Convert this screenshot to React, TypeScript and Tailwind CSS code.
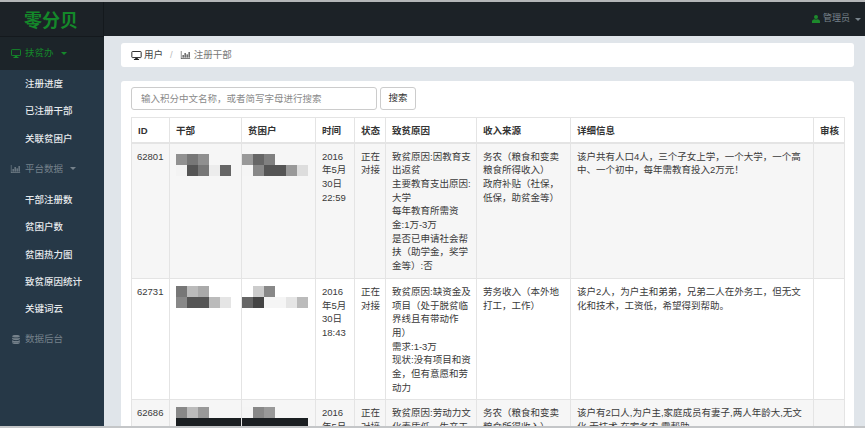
import React from 'react'

const font = { fontFamily: '"Liberation Sans", "Noto Sans CJK SC", sans-serif' }

function Desktop({ className }: { className: string }) {
  return (
    <svg viewBox="0 0 16 14" className={className} fill="none">
      <rect x="0.75" y="0.75" width="14.5" height="9.5" rx="1" stroke="currentColor" strokeWidth="1.5" />
      <path d="M6 11h4v1.5h2V14H4v-1.5h2z" fill="currentColor" />
    </svg>
  )
}

function Bars({ className }: { className: string }) {
  return (
    <svg viewBox="0 0 14 12" className={className} fill="currentColor">
      <path d="M0 0h1v11h13v1H0z" />
      <rect x="2.5" y="6" width="2" height="4" />
      <rect x="5.5" y="3" width="2" height="7" />
      <rect x="8.5" y="5" width="2" height="5" />
      <rect x="11.5" y="1.5" width="2" height="8.5" />
    </svg>
  )
}

function Database({ className }: { className: string }) {
  return (
    <svg viewBox="0 0 12 14" className={className} fill="currentColor">
      <path d="M6 0c3.3 0 6 .8 6 2s-2.700 2-6 2-6-.8-6-2 2.700-2 6-2z" />
      <path d="M0 3.700c1 1 3.400 1.500 6 1.500s5-.5 6-1.500V6c0 1.100-2.700 2-6 2S0 7.100 0 6z" />
      <path d="M0 7.700c1 1 3.400 1.500 6 1.500s5-.5 6-1.500V10c0 1.100-2.700 2-6 2S0 11.100 0 10z" />
      <path d="M0 11c1 1 3.400 1.300 6 1.300s5-.3 6-1.300v1c0 1.100-2.700 2-6 2s-6-.9-6-2z" />
    </svg>
  )
}

function User({ className }: { className: string }) {
  return (
    <svg viewBox="0 0 10 10" className={className} fill="currentColor">
      <circle cx="5" cy="2.600" r="2.500" />
      <path d="M0 10V7.800C0 6.300 1.500 5.500 3 5.200c1.200.6 2.800.6 4 0 1.500.3 3 1.100 3 2.600V10z" />
    </svg>
  )
}

function Caret({ className }: { className: string }) {
  return <span className={`inline-block border-x-[3px] border-t-[3px] border-x-transparent ${className}`} />
}

// mosaic that hides the names, one row of 11px tiles per array
function Mosaic({ rows }: { rows: string[][] }) {
  return (
    <div className="blur-[0.5px]">
      {rows.map((row, i) => (
        <div key={i} className="flex h-[11px]">
          {row.map((c, j) => (
            <div key={j} className="h-[11px] w-[11px]" style={{ backgroundColor: c }} />
          ))}
        </div>
      ))}
    </div>
  )
}

const subItem = 'flex h-[27.300px] items-center pl-[25px] text-[9.500px] font-medium text-[#e6eaed]'

function SubMenu({ items }: { items: string[] }) {
  return (
    <ul>
      {items.map((t) => (
        <li key={t} className={subItem}>{t}</li>
      ))}
    </ul>
  )
}

function Sidebar() {
  return (
    <aside className="w-[104px] shrink-0 bg-[#263847]">
      <div className="flex h-[34px] items-center justify-center border-r border-[#14191d] bg-[#1c2227] pr-[1px] pt-[4px] text-[18px] font-bold text-[#14882a]">
        零分贝
      </div>
      <div className="flex h-[34px] items-center gap-[4px] border-t border-[#14191d] bg-[#1c2429] pl-[11px] text-[9.500px] text-[#14892a]">
        <Desktop className="h-[9px] w-[10px]" />
        <span>扶贫办</span>
        <Caret className="ml-[3px] border-t-[#14892a]" />
      </div>
      <div className="pt-[0.500px]">
        <SubMenu items={['注册进度', '已注册干部', '关联贫困户']} />
      </div>
      <div className="mt-[3px] flex h-[27px] items-center gap-[4px] pl-[10px] text-[9.500px] text-[#75818b]">
        <Bars className="h-[8px] w-[11px]" />
        <span>平台数据</span>
        <Caret className="ml-[3px] border-t-[#75818b]" />
      </div>
      <div className="pt-[4px]">
        <SubMenu items={['干部注册数', '贫困户数', '贫困热力图', '致贫原因统计', '关键词云']} />
      </div>
      <div className="mt-[3px] flex h-[27px] items-center gap-[5px] pl-[12px] text-[9.500px] text-[#75818b]">
        <Database className="h-[9px] w-[8px]" />
        <span>数据后台</span>
      </div>
    </aside>
  )
}

const th = 'border border-[#e4e4e4] border-b-2 pl-[6px] pr-0 pt-[2px] text-left text-[9.500px] font-bold text-[#333] whitespace-nowrap'
const td = 'border border-[#e4e4e4] pl-[6px] pr-[5px] pt-[6px] pb-[5px] align-top'
const mosaicTd = 'border border-[#e4e4e4] pb-[5px] align-top'

type Row = {
  id: string
  cadre: string[][]
  poor: string[][]
  time: string[]
  reason: string[]
  income: string[]
  detail: string
  height: string
  mosaicTop: string
  stripe: boolean
}

const rows: Row[] = [
  {
    id: '62801',
    cadre: [
      ['#919191', '#777777', '#8f8f8f'],
      ['#f3f3f3', '#555555', '#777777', '#ececec', '#666666'],
    ],
    poor: [
      ['#999999', '#666666', '#808080'],
      ['#f5f5f5', '#888888', '#555555', '#555555', '#999999', '#dddddd'],
    ],
    time: ['2016', '年5月', '30日', '22:59'],
    reason: ['致贫原因:因教育支出返贫', '主要教育支出原因:大学', '每年教育所需资金:1万-3万', '是否已申请社会帮扶（助学金，奖学金等）:否'],
    income: ['务农（粮食和变卖粮食所得收入）', '政府补贴（社保，低保，助贫金等）'],
    detail: '该户共有人口4人，三个子女上学，一个大学，一个高中、一个初中，每年需教育投入2万元！',
    height: 'h-[134px]',
    mosaicTop: 'pt-[10px]',
    stripe: true,
  },
  {
    id: '62731',
    cadre: [
      ['#777777', '#bbbbbb', '#aaaaaa'],
      ['#888888', '#555555', '#555555', '#bbbbbb', '#e5e5e5'],
    ],
    poor: [
      ['#ffffff', '#cccccc', '#888888'],
      ['#666666', '#444444', '#f5f5f5', '#f5f5f5', '#e5e5e5', '#bbbbbb'],
    ],
    time: ['2016', '年5月', '30日', '18:43'],
    reason: ['致贫原因:缺资金及项目（处于脱贫临界线且有带动作用）', '需求:1-3万', '现状:没有项目和资金，但有意愿和劳动力'],
    income: ['劳务收入（本外地打工，工作）'],
    detail: '该户2人，为户主和弟弟，兄弟二人在外务工，但无文化和技术，工资低，希望得到帮助。',
    height: 'h-[120px]',
    mosaicTop: 'pt-[7px]',
    stripe: false,
  },
  {
    id: '62686',
    cadre: [
      ['#888888', '#bbbbbb', '#999999'],
      ['#1b1f22', '#1b1f22', '#1b1f22', '#1b1f22', '#1b1f22', '#1b1f22'],
    ],
    poor: [
      ['#f5f5f5', '#888888', '#999999'],
      ['#1b1f22', '#1b1f22', '#1b1f22', '#1b1f22', '#1b1f22', '#1b1f22'],
    ],
    time: ['2016', '年5月', '30日', '14:20'],
    reason: ['致贫原因:劳动力文化素质低，生产工具落后'],
    income: ['务农（粮食和变卖粮食所得收入）'],
    detail: '该户有2口人,为户主,家庭成员有妻子,两人年龄大,无文化,无技术,在家务农,需帮助.',
    height: 'h-[120px]',
    mosaicTop: 'pt-[7px]',
    stripe: true,
  },
]

function DataTable() {
  return (
    <table className="w-[713px] table-fixed border-collapse border border-[#e4e4e4] text-[9.500px] leading-[13.700px] text-[#3a3a3a]">
      <colgroup>
        <col className="w-[38px]" />
        <col className="w-[72px]" />
        <col className="w-[74px]" />
        <col className="w-[39px]" />
        <col className="w-[31px]" />
        <col className="w-[91px]" />
        <col className="w-[94px]" />
        <col className="w-[243px]" />
        <col className="w-[31px]" />
      </colgroup>
      <thead>
        <tr className="h-[25px]">
          {['ID', '干部', '贫困户', '时间', '状态', '致贫原因', '收入来源', '详细信息', '审核'].map((h) => (
            <th key={h} className={th}>{h}</th>
          ))}
        </tr>
      </thead>
      <tbody>
        {rows.map((r) => (
          <tr key={r.id} className={`${r.height} ${r.stripe ? 'bg-[#f6f6f6]' : 'bg-white'}`}>
            <td className={`${td} !pl-[5px]`}>{r.id}</td>
            <td className={`${mosaicTd} ${r.mosaicTop} pl-[6px]`}><Mosaic rows={r.cadre} /></td>
            <td className={`${mosaicTd} ${r.mosaicTop}`}><Mosaic rows={r.poor} /></td>
            <td className={td}>{r.time.map((t) => <div key={t}>{t}</div>)}</td>
            <td className={td}>正在对接</td>
            <td className={td}>{r.reason.map((t) => <div key={t}>{t}</div>)}</td>
            <td className={td}>{r.income.map((t) => <div key={t}>{t}</div>)}</td>
            <td className={td}>{r.detail}</td>
            <td className={td}></td>
          </tr>
        ))}
      </tbody>
    </table>
  )
}

export default function App() {
  return (
    <div className="flex h-[428px] w-[865px] flex-col overflow-hidden bg-[#e0e5ea]" style={font}>
      <div className="h-[2px] shrink-0 bg-[#b4b6b8]" />
      <div className="flex min-h-0 flex-1">
        <Sidebar />
        <div className="flex min-w-0 flex-1 flex-col">
          <header className="flex h-[34px] shrink-0 items-center justify-end gap-[3px] bg-[#1c2227] pr-[4px] text-[9px] text-[#78838c]">
            <User className="h-[8px] w-[8px] text-[#1d8a2c]" />
            <span>管理员</span>
            <Caret className="ml-[2px] border-t-[#78838c]" />
          </header>
          <main className="min-h-0 flex-1 overflow-hidden pl-[17px] pr-[11px] pt-[7px]">
            <nav className="flex h-[24px] items-center rounded-[3px] bg-white pl-[10px] text-[9.500px] text-[#444]">
              <Desktop className="mr-[2px] h-[9px] w-[11px] text-[#222]" />
              <span>用户</span>
              <span className="mx-[7px] text-[#bbb]">/</span>
              <Bars className="mr-[3px] h-[8px] w-[11px] text-[#555]" />
              <span className="text-[#777]">注册干部</span>
            </nav>
            <section className="mt-[14px] rounded-t-[3px] bg-white px-[10px] pt-[6px]">
              <div className="mb-[7px] flex gap-[3px]">
                <input
                  readOnly
                  placeholder="输入积分中文名称，或者简写字母进行搜索"
                  className="h-[23px] w-[246px] rounded-[3px] border border-[#ccc] px-[9px] text-[9.500px] placeholder:text-[#8a8a8a]"
                />
                <button className="h-[23px] w-[36px] rounded-[3px] border border-[#ccc] bg-white text-[9.500px] text-[#333]">搜索</button>
              </div>
              <DataTable />
            </section>
          </main>
        </div>
      </div>
      <div className="h-[2px] shrink-0 bg-[#c4c6c8]" />
    </div>
  )
}
